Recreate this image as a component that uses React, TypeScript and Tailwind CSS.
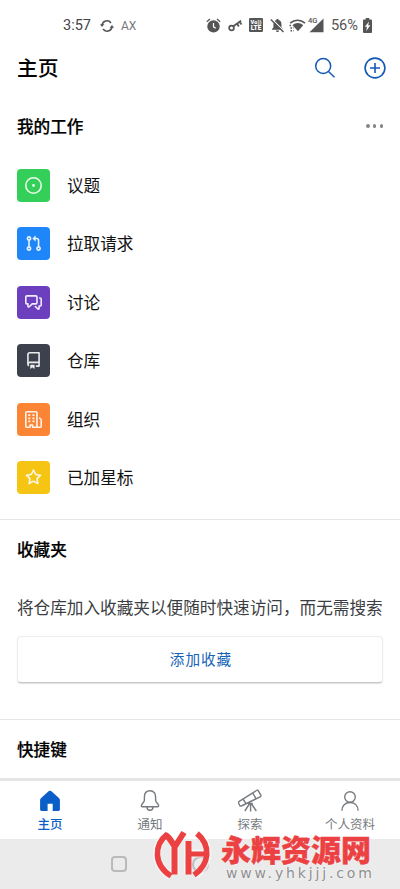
import type { ReactNode } from "react";

function StatusBar() {
  return (
    <header className="flex h-[45px] items-center pt-[6px] pl-[63px] pr-[28px] font-['Roboto',sans-serif] text-[#555]">
      <span className="pt-px text-[14.500px] text-[#444]">3:57</span>
      <svg className="ml-[9px] h-[14px] w-[14px]" viewBox="0 0 14 14" fill="none" stroke="#555" strokeWidth="1.5">
        <path d="M2 6a5 5 0 0 1 9-2M12 8a5 5 0 0 1-9 2" />
        <path d="M0 5.200h4.400L2 8zM14 8.800H9.600L12 6z" fill="#555" stroke="none" />
      </svg>
      <span className="ml-[7px] text-[12px] text-[#777]">AX</span>
      <div className="ml-auto flex items-center">
        <svg className="h-[15px] w-[15px]" viewBox="0 0 15 15" fill="#555">
          <circle cx="7.500" cy="8.400" r="6.200" />
          <path d="M.8 3.800 4 1M14.200 3.800 11 1" stroke="#555" strokeWidth="1.3" />
          <path d="M7.500 5v3.800l2.300 1.400" fill="none" stroke="#fff" strokeWidth="1.2" />
        </svg>
        <svg className="ml-[7px] h-[14px] w-[15px]" viewBox="0 0 15 14" fill="none" stroke="#555">
          <circle cx="3.500" cy="10" r="2.400" strokeWidth="1.7" />
          <path d="m5.300 8.300 7.800-5.500M9 5.500l1.800 3M11.500 3.800l2 2.700" strokeWidth="1.8" />
        </svg>
        <svg className="ml-[6px] h-[14px] w-[14px]" viewBox="0 0 14 14">
          <rect width="14" height="14" rx="1.3" fill="#555" />
          <text x="7" y="6.3" textAnchor="middle" fontSize="5.7" fontWeight="900" fill="#fff" fontFamily="Roboto">Vo))</text>
          <text x="7" y="12.3" textAnchor="middle" fontSize="6.5" fontWeight="900" fill="#fff" fontFamily="Roboto">LTE</text>
        </svg>
        <svg className="ml-[7px] h-[15px] w-[15px]" viewBox="0 0 15 15" fill="#555">
          <path d="M2 11.800V11l1.400-1.400V6.400c0-2.200 1.200-3.800 3.100-4.300V1h2v1.100c2 .5 3 2.100 3 4.300v3.200L13 11v.8zM6 12.600h3c0 2-3 2-3 0z" />
          <path d="m2 1.200 12 12" stroke="#fff" strokeWidth="1.4" />
          <path d="m.8 1.400 12.700 12.700" stroke="#555" strokeWidth="1.4" />
        </svg>
        <svg className="ml-[4px] h-[15px] w-[17px]" viewBox="0 0 17 15" fill="#555">
          <path d="M1.200 5.200C5.500 1.300 11.500 1.300 16 5.200" fill="none" stroke="#555" strokeWidth="1.6" />
          <path d="M3.500 7.200c3-2.900 7.500-2.900 10.700 0L9 13.300z" />
          <path d="M.5 7.500h2M1.500 10h3M1.500 12.800h3" stroke="#555" strokeWidth="1.5" strokeDasharray="1.5 1" />
        </svg>
        <svg className="ml-[1px] h-[16px] w-[17px] overflow-visible" viewBox="0 0 17 16" fill="#555">
          <path d="M16.500 1.500v13.800H2.500z" />
          <text x="1" y="6.200" fontSize="7.500" fontWeight="500" fontFamily="Roboto" stroke="#fff" strokeWidth="1.200" paintOrder="stroke">4G</text>
        </svg>
        <span className="ml-[7px] text-[14.600px] text-[#555]">56%</span>
        <svg className="ml-[5px] h-[15px] w-[9px]" viewBox="0 0 10 15" preserveAspectRatio="none" fill="#555">
          <path d="M1 1.600h2V0h4v1.600h2a1 1 0 0 1 1 1V14a1 1 0 0 1-1 1H1a1 1 0 0 1-1-1V2.600a1 1 0 0 1 1-1z" />
          <path d="M6.800 3.500 2 8.700h2.400L3.600 13l4.600-5.700H5.700z" fill="#fff" />
        </svg>
      </div>
    </header>
  );
}

const work = [
  {
    label: "议题",
    color: "bg-[#34cf58]",
    d: "M8 9.300a1.300 1.300 0 1 0 0-2.600 1.300 1.300 0 0 0 0 2.600ZM8 0a8 8 0 1 1 0 16A8 8 0 0 1 8 0ZM1.500 8a6.500 6.500 0 1 0 13 0 6.500 6.500 0 0 0-13 0Z",
  },
  {
    label: "拉取请求",
    color: "bg-[#1f86fa]",
    d: "M1.500 3.250a2.250 2.250 0 1 1 3 2.122v5.256a2.251 2.251 0 1 1-1.500 0V5.372A2.250 2.250 0 0 1 1.500 3.250Zm5.677-.177L9.573.677A.250.250 0 0 1 10 .854V2.500h1A2.500 2.500 0 0 1 13.500 5v5.628a2.251 2.251 0 1 1-1.500 0V5a1 1 0 0 0-1-1h-1v1.646a.250.250 0 0 1-.427.177L7.177 3.427a.250.250 0 0 1 0-.354ZM3.750 2.500a.750.750 0 1 0 0 1.500.750.750 0 0 0 0-1.500Zm0 9.500a.750.750 0 1 0 0 1.500.750.750 0 0 0 0-1.500Zm8.250.750a.750.750 0 1 0 1.500 0 .750.750 0 0 0-1.500 0Z",
  },
  {
    label: "讨论",
    color: "bg-[#6c3fbe]",
    d: "M1.750 1h8.500c.966 0 1.750.784 1.750 1.750v5.500A1.750 1.750 0 0 1 10.250 10H7.061l-2.574 2.573A1.458 1.458 0 0 1 2 11.543V10h-.250A1.750 1.750 0 0 1 0 8.250v-5.500C0 1.784.784 1 1.750 1ZM1.500 2.750v5.500c0 .138.112.250.250.250h1a.750.750 0 0 1 .750.750v2.190l2.720-2.720a.749.749 0 0 1 .530-.220h3.500a.250.250 0 0 0 .250-.250v-5.500a.250.250 0 0 0-.250-.250h-8.500a.250.250 0 0 0-.250.250Zm13 2a.250.250 0 0 0-.250-.250h-.500a.750.750 0 0 1 0-1.500h.500c.966 0 1.750.784 1.750 1.750v5.500A1.750 1.750 0 0 1 14.250 12H14v1.543a1.458 1.458 0 0 1-2.487 1.030L9.220 12.280a.749.749 0 0 1 .326-1.275.749.749 0 0 1 .734.215l2.220 2.220v-2.190a.750.750 0 0 1 .750-.750h1a.250.250 0 0 0 .250-.250Z",
  },
  {
    label: "仓库",
    color: "bg-[#3d414d]",
    d: "M2 2.500A2.500 2.500 0 0 1 4.500 0h8.750a.750.750 0 0 1 .750.750v12.500a.750.750 0 0 1-.750.750h-2.500a.750.750 0 0 1 0-1.500h1.750v-2h-8a1 1 0 0 0-.714 1.700.750.750 0 1 1-1.072 1.050A2.495 2.495 0 0 1 2 11.500Zm10.500-1h-8a1 1 0 0 0-1 1v6.708A2.486 2.486 0 0 1 4.500 9h8ZM5 12.250a.250.250 0 0 1 .250-.250h3.500a.250.250 0 0 1 .250.250v3.250a.250.250 0 0 1-.400.200l-1.450-1.087a.249.249 0 0 0-.300 0L5.400 15.700a.250.250 0 0 1-.400-.200Z",
  },
  {
    label: "组织",
    color: "bg-[#fb8435]",
    d: "M1.750 16A1.750 1.750 0 0 1 0 14.250V1.750C0 .784.784 0 1.750 0h8.500C11.216 0 12 .784 12 1.750v12.500c0 .085-.006.168-.018.250h2.268a.250.250 0 0 0 .250-.250V8.285a.250.250 0 0 0-.111-.208l-1.055-.703a.749.749 0 1 1 .832-1.248l1.055.703c.487.325.779.871.779 1.456v5.965A1.750 1.750 0 0 1 14.250 16h-3.500a.766.766 0 0 1-.197-.026c-.099.017-.200.026-.303.026h-3a.750.750 0 0 1-.750-.750V14h-1v1.250a.750.750 0 0 1-.750.750Zm-.250-1.750c0 .138.112.250.250.250H4v-1.250a.750.750 0 0 1 .750-.750h2.500a.750.750 0 0 1 .750.750v1.250h2.250a.250.250 0 0 0 .250-.250V1.750a.250.250 0 0 0-.250-.250h-8.500a.250.250 0 0 0-.250.250ZM3 3h2v1.700H3ZM7 3h2v1.700H7ZM3 6h2v1.700H3ZM7 6h2v1.700H7ZM3 9h2v1.700H3ZM7 9h2v1.700H7Z",
  },
  {
    label: "已加星标",
    color: "bg-[#f6c514]",
    d: "M8 .250a.750.750 0 0 1 .673.418l1.882 3.815 4.210.612a.750.750 0 0 1 .416 1.279l-3.046 2.970.719 4.192a.751.751 0 0 1-1.088.791L8 12.347l-3.766 1.980a.750.750 0 0 1-1.088-.790l.720-4.194L.818 6.374a.750.750 0 0 1 .416-1.280l4.210-.611L7.327.668A.750.750 0 0 1 8 .250Zm0 2.445L6.615 5.500a.750.750 0 0 1-.564.410l-3.097.450 2.240 2.184a.750.750 0 0 1 .216.664l-.528 3.084 2.769-1.456a.750.750 0 0 1 .698 0l2.770 1.456-.530-3.084a.750.750 0 0 1 .216-.664l2.240-2.183-3.096-.450a.750.750 0 0 1-.564-.410L8 2.694Z",
  },
];

function Tab({ label, active, children }: { label: string; active?: boolean; children: ReactNode }) {
  return (
    <div className={`flex w-[100px] flex-col items-center pt-[8px] ${active ? "text-[#0b5ec8]" : "text-[#767b80]"}`}>
      <svg className="h-6 w-6" viewBox="0 0 24 24" fill="none" stroke="currentColor" strokeWidth="1.4">
        {children}
      </svg>
      <span className={`mt-[4px] text-[12.500px] leading-[14px] ${active ? "font-medium" : ""}`}>{label}</span>
    </div>
  );
}

export default function App() {
  return (
    <div className="relative flex h-[889px] w-[400px] flex-col overflow-hidden bg-white font-['Noto_Sans_CJK_SC',sans-serif] text-[16.640px] text-[#111]">
      <StatusBar />
      <div className="flex h-[46px] items-center pl-[17px] pr-[14px]">
        <h1 className="text-[20.800px] font-medium text-black">主页</h1>
        <svg className="ml-auto h-[22px] w-[22px]" viewBox="0 0 22 22" fill="none" stroke="#1658b5" strokeWidth="1.5">
          <circle cx="9.200" cy="9" r="7.500" />
          <path d="m14.500 14.500 6 5.800" />
        </svg>
        <svg className="ml-[28px] h-[22px] w-[22px]" viewBox="0 0 22 22" fill="none" stroke="#1658b5" strokeWidth="1.6">
          <circle cx="11" cy="11" r="9.900" />
          <path d="M11 6v10M6 11h10" />
        </svg>
      </div>
      <section className="h-[428px] pt-[17px]">
        <div className="flex h-[36px] items-center justify-between pl-[17px] pr-[17px]">
          <h2 className="font-medium text-black [-webkit-text-stroke:0.2px_black]">我的工作</h2>
          <div className="flex gap-[3.500px]">
            <i className="size-[3.200px] rounded-full bg-[#858585]" />
            <i className="size-[3.200px] rounded-full bg-[#858585]" />
            <i className="size-[3.200px] rounded-full bg-[#858585]" />
          </div>
        </div>
        <ul className="pt-[12px]">
          {work.map(({ label, color, d }) => (
            <li key={label} className="flex h-[58.500px] items-center gap-[17px] pl-[17px]">
              <span className={`flex size-[33px] items-center justify-center rounded-[4px] ${color}`}>
                <svg className="size-[17px]" viewBox="0 0 16 16" fill="#fff" fillOpacity=".9" fillRule="evenodd">
                  <path d={d} />
                </svg>
              </span>
              <span>{label}</span>
            </li>
          ))}
        </ul>
      </section>
      <section className="h-[200px] border-t border-[#e5e5e7] px-[17px] pt-[16px]">
        <h2 className="leading-[26px] font-medium text-black [-webkit-text-stroke:0.2px_black]">收藏夹</h2>
        <p className="mt-[32px] leading-[26px] whitespace-nowrap text-[#3b3e42]">将仓库加入收藏夹以便随时快速访问，而无需搜索</p>
        <button className="mt-[16px] block h-[47px] w-full rounded-[4px] border border-[#ececec] border-b-[#c8c8c8] bg-white pb-[2px] pl-[2px] text-[14.600px] font-normal tracking-[1px] text-[#1463b6] shadow-[0_1px_1px_rgba(0,0,0,0.12)]">
          添加收藏
        </button>
      </section>
      <section className="h-[59px] border-t border-[#e5e5e7] pt-[16px] pl-[17px]">
        <h2 className="leading-[26px] font-medium text-black [-webkit-text-stroke:0.2px_black]">快捷键</h2>
      </section>
      <nav className="flex h-[61px] border-t-[3px] border-[#e5e5e5] bg-white">
        <Tab label="主页" active>
          <path fill="currentColor" stroke="none" d="M12 1.800a2 2 0 0 1 1.400.5l7.500 6.600c.7.600 1 1.200 1 2v9.600c0 .8-.6 1.400-1.400 1.400h-5.800v-7.200H9.600v7.200H3.500c-.8 0-1.400-.6-1.400-1.400v-9.600c0-.8.3-1.400 1-2l7.500-6.600c.4-.4.9-.5 1.400-.5z" />
        </Tab>
        <Tab label="通知">
          <path d="M12 1.800c-3.600 0-5.600 2.600-5.600 6.200v3.300c0 1.800-3.100 4-3.100 5.500 0 .6.400 1 1 1h15.400c.6 0 1-.4 1-1 0-1.500-3.100-3.700-3.100-5.500V8c0-3.600-2-6.200-5.600-6.200zM9 18c0 4.300 6 4.300 6 0" />
        </Tab>
        <Tab label="探索">
          <g strokeLinejoin="round">
            <path d="M1.200 12.300 18.500 1.500c.7-.5 1.500-.3 1.900.4l2.400 4.200c.4.700.1 1.400-.7 1.800L3.400 17c-.7.300-1.200.1-1.600-.5L.7 14.200c-.4-.8-.2-1.400.5-1.900zM5 10l3 4.700M14.700 4l3.400 5.800M12.600 15v7.500M11.400 15l-4.600 7M13.600 15l4.700 7M9.800 14.500h5" />
          </g>
        </Tab>
        <Tab label="个人资料">
          <circle cx="12" cy="8" r="5.300" />
          <path d="M3.900 21.800c0-5.300 3.300-8.300 8.100-8.300s8.100 3 8.100 8.300" />
        </Tab>
      </nav>
      <footer className="flex h-[50px] items-center bg-[#ebebeb] pl-[111px]">
        <div className="size-[16px] rounded-[4px] border-2 border-[#bababa]" />
        <div className="ml-[65px] size-[17px] rounded-full border-2 border-[#bdbdbd]" />
      </footer>
      <div className="absolute top-[829px] left-[153px] flex">
        <svg className="h-[52px] w-[58px]" viewBox="0 0 58 52" fill="none">
          <g stroke="#fff" strokeOpacity=".6" strokeWidth="8">
            <path d="M14.500 5C0 16 0 36 18 47M44.500 4c14 12 12.500 32-2.500 42.500M31 3l-9.500 14v28M35 12v33M35 24.500h17" />
          </g>
          <g stroke="#ec4143">
            <path d="M14.500 5C.5 16 .5 36 18 47M44 4.500c14.500 12 12.500 31-3 41.500" strokeWidth="5.600" />
            <path d="M12.500 6c4 2 6 7 9 11V45.500M31 3.500l-9 14" strokeWidth="6" />
            <path d="M35.500 12v33.500" strokeWidth="6" />
            <path d="M35 25h17" strokeWidth="5" />
          </g>
        </svg>
        <div className="pt-[3px] pl-[10px]">
          <div className="text-[30px] leading-[32px] font-black whitespace-nowrap text-[#ec4143] [text-shadow:0_0_2px_white] [-webkit-text-stroke:0.4px_#ec4143]">永辉资源网</div>
          <div className="mt-px pl-[5px] font-['DejaVu_Sans',sans-serif] text-[14px] leading-[16px] tracking-[2.850px] whitespace-nowrap text-[#8f8f8f] [text-shadow:0_0_2px_white]">www.yhkjjj.com</div>
        </div>
      </div>
    </div>
  );
}
